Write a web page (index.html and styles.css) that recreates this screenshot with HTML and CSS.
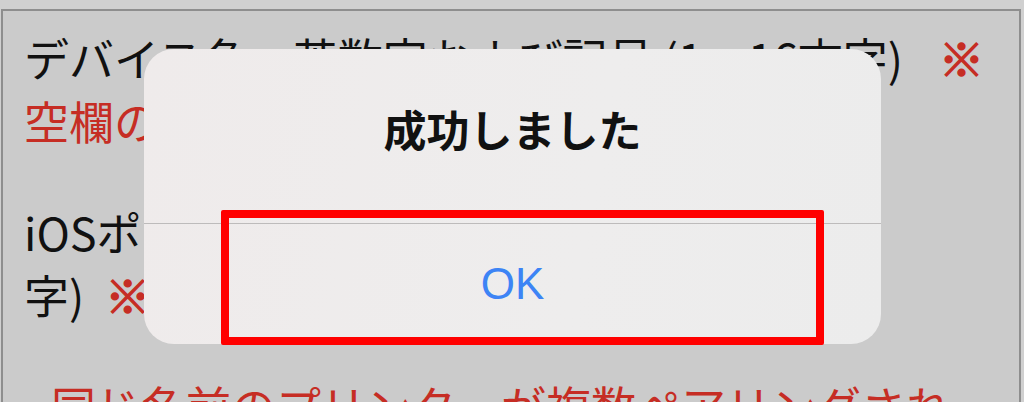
FILE: index.html
```html
<!DOCTYPE html>
<html lang="ja">
<head>
<meta charset="utf-8">
<title>成功しました</title>
<link rel="stylesheet" href="styles.css">
</head>
<body>
<div class="panel">
  <div class="para">
    <div class="line">デバイス名ー英数字および記号 (1～16文字)<span class="mark mark-wide">※</span></div>
    <div class="line red">空欄の場合はプリンター名が設定されます</div>
  </div>
  <div class="para">
    <div class="line">iOSポート名ー英数字および記号 (1～16文</div>
    <div class="line">字)<span class="mark mark-narrow">※</span><span class="red">空欄の場合は自動で設定されます</span></div>
  </div>
  <div class="para">
    <div class="line red"><span class="dot">・</span>同じ名前のプリンターが複数ペアリングされ</div>
  </div>
</div>

<div class="dialog">
  <div class="dialog-title">成功しました</div>
  <div class="dialog-btn">OK</div>
</div>
<div class="highlight"></div>
</body>
</html>
```

FILE: styles.css
```css
html, body {
  margin: 0;
  padding: 0;
}
body {
  width: 1024px;
  height: 402px;
  overflow: hidden;
  background: #d0d0d0;
  font-family: "Noto Sans CJK JP", "Noto Sans", sans-serif;
  position: relative;
}
.panel {
  margin: 9px 0 0 1px;
  width: 1020px;
  height: 400px;
  border: 2px solid #8e8e8e;
  border-bottom: none;
  background: #cbcbcb;
  padding: 15px 0 0 21px;
  box-sizing: border-box;
  overflow: hidden;
}
.para {
  margin-bottom: 48px;
}
.line {
  font-size: 45px;
  line-height: 63px;
  color: #111;
  white-space: nowrap;
}
.red {
  color: #c62d24;
}
.mark {
  color: #c62d24;
  font-weight: bold;
  -webkit-text-stroke: 1.5px #c62d24;
  margin-right: 4px;
}
.mark-wide {
  margin-left: 36px;
}
.mark-narrow {
  margin-left: 21px;
}
.dot {
  margin-left: -6px;
  margin-right: -12px;
}
.dialog {
  position: absolute;
  left: 144px;
  top: 49px;
  width: 737px;
  height: 295px;
  border-radius: 30px;
  background: linear-gradient(100deg, #efebeb 0%, #eeeded 60%, #ececec 100%);
  display: flex;
  flex-direction: column;
  overflow: hidden;
}
.dialog-title {
  height: 175px;
  padding-bottom: 17px;
  border-bottom: 1px solid #bdbbbb;
  display: flex;
  align-items: center;
  justify-content: center;
  font-size: 43px;
  font-weight: bold;
  color: #111;
  box-sizing: border-box;
}
.dialog-btn {
  flex: 1;
  display: flex;
  align-items: center;
  justify-content: center;
  font-family: "Liberation Sans", "Noto Sans", sans-serif;
  font-size: 44px;
  color: #3d84f5;
}
.highlight {
  position: absolute;
  left: 221px;
  top: 210px;
  width: 603px;
  height: 135px;
  border: 8px solid #ff0000;
  border-radius: 2px;
  box-sizing: border-box;
}
```
